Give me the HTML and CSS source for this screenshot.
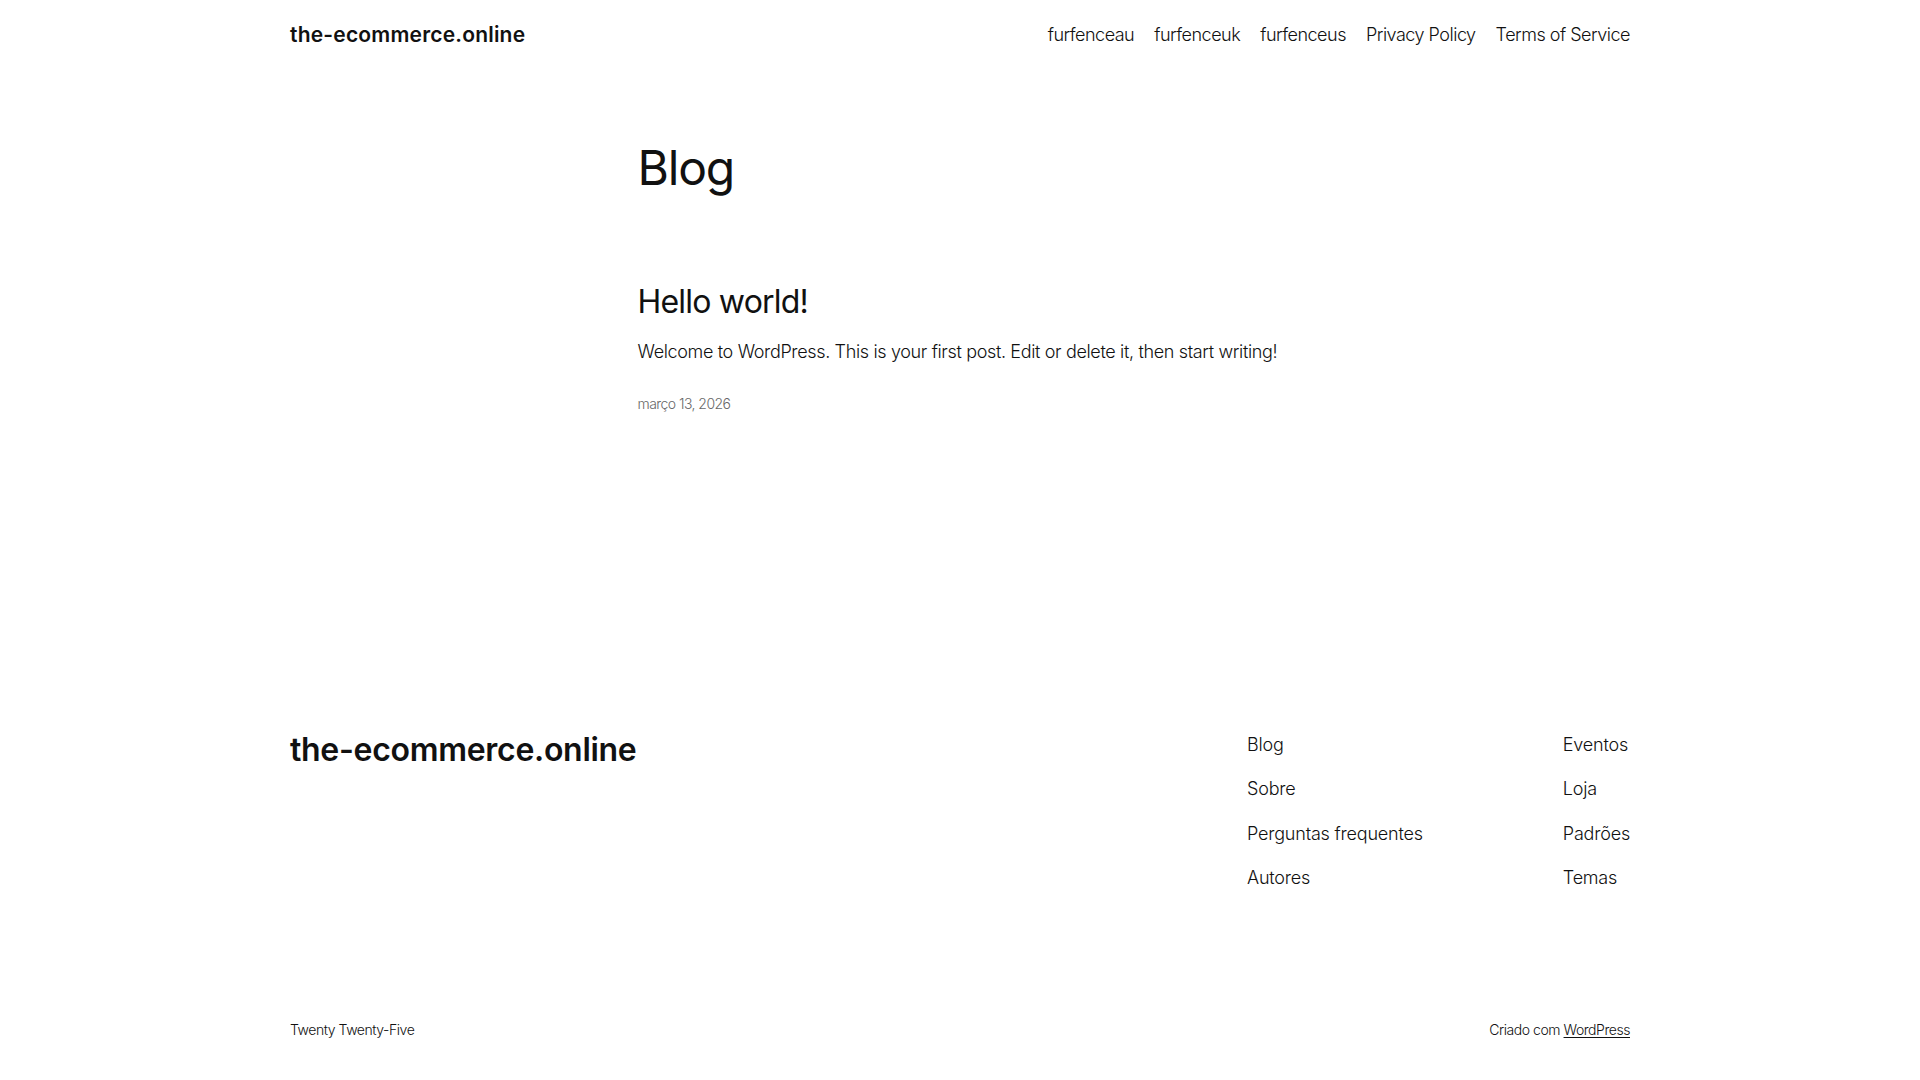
FILE: index.html
```html
<!DOCTYPE html>
<html lang="pt-BR">
<head>
<meta charset="utf-8">
<title>Blog – the-ecommerce.online</title>
<link rel="stylesheet" href="styles.css">
</head>
<body>
<div class="page">
  <header class="site-header">
    <a class="site-title" href="#">the-ecommerce.online</a>
    <nav class="main-nav">
      <a href="#">furfenceau</a>
      <a href="#">furfenceuk</a>
      <a href="#">furfenceus</a>
      <a href="#">Privacy Policy</a>
      <a href="#">Terms of Service</a>
    </nav>
  </header>

  <main class="content">
    <h1 class="page-title">Blog</h1>
    <article class="post">
      <h2 class="post-title"><a href="#">Hello world!</a></h2>
      <p class="post-excerpt">Welcome to WordPress. This is your first post. Edit or delete it, then start writing!</p>
      <time class="post-date">março 13, 2026</time>
    </article>
  </main>

  <footer class="site-footer">
    <div class="footer-top">
      <a class="footer-title" href="#">the-ecommerce.online</a>
      <div class="footer-navs">
        <nav class="footer-nav">
          <a href="#">Blog</a>
          <a href="#">Sobre</a>
          <a href="#">Perguntas frequentes</a>
          <a href="#">Autores</a>
        </nav>
        <nav class="footer-nav">
          <a href="#">Eventos</a>
          <a href="#">Loja</a>
          <a href="#">Padrões</a>
          <a href="#">Temas</a>
        </nav>
      </div>
    </div>
    <div class="footer-bottom">
      <span class="credit">Twenty Twenty-Five</span>
      <span class="credit">Criado com <a class="wp-link" href="#">WordPress</a></span>
    </div>
  </footer>
</div>
</body>
</html>
```

FILE: styles.css
```css
html, body {
  margin: 0;
  padding: 0;
  background: #ffffff;
}

body {
  font-family: Inter, "Noto Sans", "DejaVu Sans", sans-serif;
  color: #111111;
  -webkit-font-smoothing: antialiased;
}

a {
  color: inherit;
  text-decoration: none;
}

.page {
  width: 1340px;
  margin: 0 auto;
}

/* Header */
.site-header {
  height: 70px;
  display: flex;
  align-items: center;
  justify-content: space-between;
}

.site-title {
  font-size: 21px;
  font-weight: 600;
  letter-spacing: 0.2px;
  line-height: 28px;
}

.main-nav {
  display: flex;
  gap: 20px;
  font-size: 18px;
  font-weight: 300;
  letter-spacing: -0.5px;
  line-height: 28px;
}

/* Main */
.content {
  width: 645px;
  margin: 0 auto;
  padding-top: 69px;
}

.page-title {
  margin: 0;
  font-size: 48px;
  font-weight: 400;
  letter-spacing: -1.2px;
  line-height: 58px;
}

.post {
  margin-top: 85px;
}

.post-title {
  margin: 0;
  font-size: 32px;
  font-weight: 400;
  letter-spacing: -0.8px;
  line-height: 40px;
}

.post-excerpt {
  margin: 16px 0 0;
  font-size: 18px;
  font-weight: 300;
  letter-spacing: -0.35px;
  line-height: 28px;
  white-space: nowrap;
}

.post-date {
  display: block;
  margin-top: 28px;
  font-size: 14px;
  font-weight: 300;
  line-height: 20px;
  color: #686868;
  letter-spacing: -0.55px;
}

/* Footer */
.site-footer {
  padding-top: 316px;
}

.footer-top {
  display: flex;
  justify-content: space-between;
  align-items: flex-start;
}

.footer-title {
  font-size: 32px;
  font-weight: 600;
  letter-spacing: -0.3px;
  line-height: 40px;
}

.footer-navs {
  width: 383px;
  margin-top: 1px;
  display: flex;
  justify-content: space-between;
}

.footer-nav {
  display: flex;
  flex-direction: column;
  gap: 16px;
  font-size: 18px;
  font-weight: 300;
  letter-spacing: -0.2px;
  line-height: 28.35px;
}

.footer-bottom {
  margin-top: 128px;
  padding-bottom: 37px;
  display: flex;
  justify-content: space-between;
  font-size: 14px;
  font-weight: 300;
  line-height: 20px;
  letter-spacing: -0.45px;
}

.wp-link {
  text-decoration: underline;
  text-underline-offset: 2px;
}
```
